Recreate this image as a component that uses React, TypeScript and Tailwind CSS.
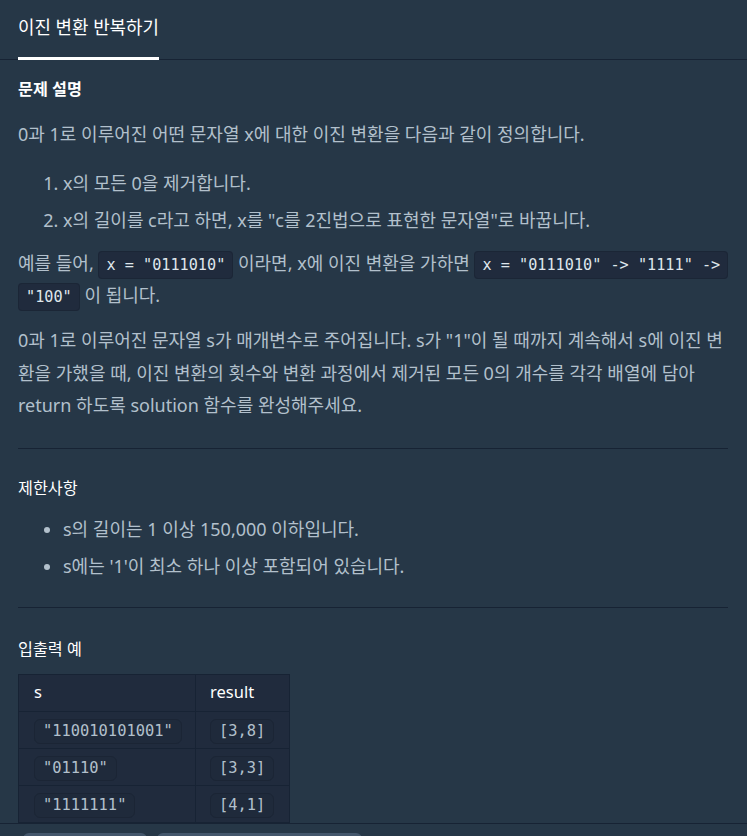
const body = "font-['Noto_Sans','Noto_Sans_CJK_KR',sans-serif]";
const mono = "font-['DejaVu_Sans_Mono','Liberation_Mono',monospace]";

const examples = [
  { s: '"110010101001"', result: "[3,8]" },
  { s: '"01110"', result: "[3,3]" },
  { s: '"1111111"', result: "[4,1]" },
];

function Code({ children }: { children: string }) {
  return (
    <code
      className={`${mono} rounded-[4px] border border-[#1b2636] bg-[#202b3d] px-[7px] py-[4px] text-[15.2px] leading-none text-[#dfe6ec] [box-decoration-break:clone]`}
    >
      {children}
    </code>
  );
}

function Pill({ children }: { children: string }) {
  return (
    <span
      className={`${mono} inline-block rounded-md border border-[#1b2535] bg-[#1f2a3b] px-[8px] leading-[23px] text-[15.4px] text-[#b2c0cc]`}
    >
      {children}
    </span>
  );
}

export default function App() {
  return (
    <div
      className={`${body} flex h-[836px] w-[747px] flex-col overflow-hidden bg-[#263747] text-[#b2c0cc]`}
    >
      <header className="flex h-[60px] shrink-0 border-b border-[#172334] pl-[18px]">
        <div className="-mb-px flex h-[60px] items-center border-b-[3px] border-white pb-[3px] text-[17.9px] text-white">
          이진 변환 반복하기
        </div>
      </header>

      <main className="flex-1 overflow-hidden pl-[18px] pr-[19px] pt-[17px] text-[18px]">
        <h5 className="text-[16.2px] font-bold leading-6 text-white">문제 설명</h5>
        <p className="mt-[17px] leading-8">
          0과 1로 이루어진 어떤 문자열 x에 대한 이진 변환을 다음과 같이 정의합니다.
        </p>
        <ol className="mt-[17px] list-decimal pl-[45px] leading-8">
          <li>x의 모든 0을 제거합니다.</li>
          <li className="mt-[5px]">x의 길이를 c라고 하면, x를 "c를 2진법으로 표현한 문자열"로 바꿉니다.</li>
        </ol>
        <p className="mt-[11px] leading-8">
          예를 들어, <Code>x = "0111010"</Code> 이라면, x에 이진 변환을 가하면{" "}
          <Code>x = "0111010" -&gt; "1111" -&gt; "100"</Code> 이 됩니다.
        </p>
        <p className="mt-[13px] leading-[32.5px]">
          0과 1로 이루어진 문자열 s가 매개변수로 주어집니다. s가 "1"이 될 때까지 계속해서 s에 이진 변환을
          가했을 때, 이진 변환의 횟수와 변환 과정에서 제거된 모든 0의 개수를 각각 배열에 담아 return 하도록
          solution 함수를 완성해주세요.
        </p>

        <hr className="mt-[26px] border-[#172334]" />

        <h5 className="mt-[27px] text-[16.2px] leading-6 text-white">제한사항</h5>
        <ul className="mt-[13px] list-disc pl-[45px] leading-8">
          <li>s의 길이는 1 이상 150,000 이하입니다.</li>
          <li className="mt-[5px]">s에는 '1'이 최소 하나 이상 포함되어 있습니다.</li>
        </ul>

        <hr className="mt-[25px] border-[#172334]" />

        <h5 className="mt-[29px] text-[16.2px] leading-6 text-white">입출력 예</h5>
        <table className="mt-[13px] border-collapse border border-[#172334] bg-[#202b3d]">
          <thead>
            <tr className="h-[37px]">
              <th className="w-[177px] border border-[#172334] pl-[15px] text-left text-[16.5px] font-normal text-white">s</th>
              <th className="w-[94px] border border-[#172334] pl-[14px] text-left text-[16.5px] font-normal text-white">result</th>
            </tr>
          </thead>
          <tbody>
            {examples.map((row) => (
              <tr key={row.s} className="h-[37px]">
                <td className="border border-[#172334] pl-[15px]">
                  <Pill>{row.s}</Pill>
                </td>
                <td className="border border-[#172334] pl-[14px]">
                  <Pill>{row.result}</Pill>
                </td>
              </tr>
            ))}
          </tbody>
        </table>
      </main>

      <footer className="flex h-[13px] shrink-0 gap-[10px] border-t border-[#172334] pl-[23px] pt-[9px]">
        <div className="h-10 w-[124px] rounded-md bg-[#44576c]" />
        <div className="h-10 w-[205px] rounded-md bg-[#44576c]" />
      </footer>
    </div>
  );
}
